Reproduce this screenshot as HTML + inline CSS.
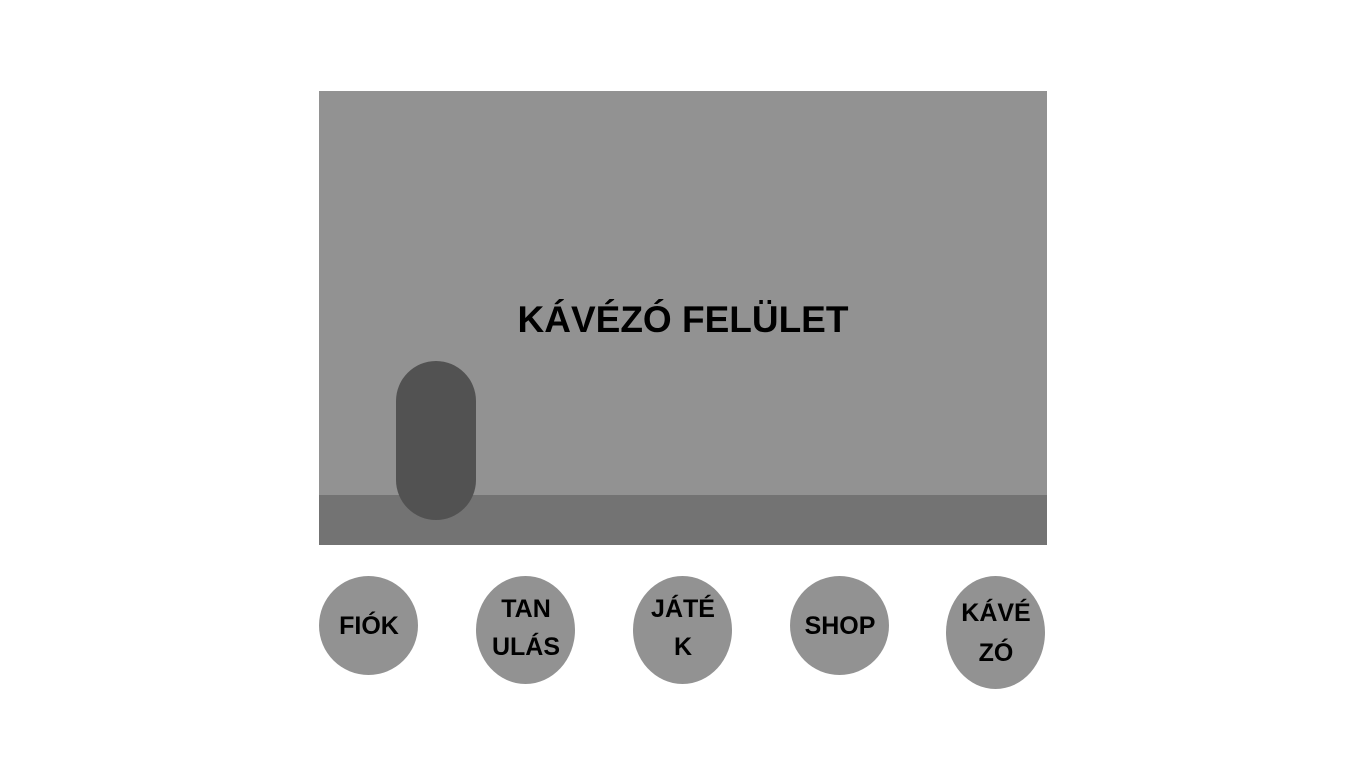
<!DOCTYPE html>
<html><head><meta charset="utf-8"><style>
body{margin:0;width:1366px;height:768px;background:#fff;position:relative;overflow:hidden;font-family:"Liberation Sans","DejaVu Sans",sans-serif;font-weight:bold;color:#000}
.a{position:absolute}
.c{position:absolute;background:#929292;border-radius:50%}
.t{position:absolute;font-size:25px;text-align:center;line-height:38px;width:120px}
</style></head><body>
<div class="a" style="left:319px;top:91px;width:728px;height:454px;background:#929292"></div>
<div class="a" style="left:319px;top:495px;width:728px;height:50px;background:#737373"></div>
<div class="a" style="left:396px;top:361px;width:80px;height:159px;background:#525252;border-radius:40px"></div>
<div class="a" style="left:319px;top:297px;width:728px;text-align:center;font-size:37px;line-height:46px">KÁVÉZÓ FELÜLET</div>
<div class="c" style="left:319px;top:576px;width:99px;height:99px"></div>
<div class="c" style="left:476px;top:576px;width:99px;height:108px"></div>
<div class="c" style="left:633px;top:576px;width:99px;height:108px"></div>
<div class="c" style="left:790px;top:576px;width:99px;height:99px"></div>
<div class="c" style="left:946px;top:576px;width:99px;height:113px"></div>
<div class="t" style="left:309px;top:607px">FIÓK</div>
<div class="t" style="left:466px;top:590px">TAN<br>ULÁS</div>
<div class="t" style="left:623px;top:590px">JÁTÉ<br>K</div>
<div class="t" style="left:780px;top:607px">SHOP</div>
<div class="t" style="left:936px;top:593px;line-height:40px">KÁVÉ<br>ZÓ</div>
</body></html>
